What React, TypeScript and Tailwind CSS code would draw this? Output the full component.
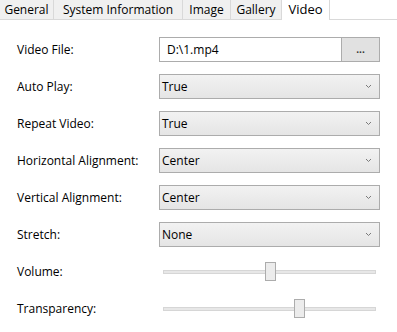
import React from "react";

const font = { fontFamily: '"Open Sans", "Noto Sans", sans-serif' };

const tabs = [
  { name: "General", w: "w-[54px]" },
  { name: "System Information", w: "w-[129px]" },
  { name: "Image", w: "w-[48px]" },
  { name: "Gallery", w: "w-[51px]" },
];

function Chevron() {
  return (
    <svg width="7" height="5" viewBox="0 0 7 5" className="shrink-0">
      <path d="M1 1 L3.5 3.5 L6 1" fill="none" stroke="#7a7a7a" strokeWidth="1" />
    </svg>
  );
}

function Select({ value }: { value: string }) {
  return (
    <div className="flex h-[25px] w-[221px] items-center justify-between border border-[#acacac] bg-gradient-to-b from-[#f2f2f2] to-[#e5e5e5] pl-[2px] pr-[7px] text-[12px] text-black">
      <span>{value}</span>
      <Chevron />
    </div>
  );
}

function Slider({ pos }: { pos: number }) {
  return (
    <div className="relative flex h-[25px] w-[221px] items-center px-[4px]">
      <div className="h-[4px] w-full border border-[#d6d6d6] bg-[#e7e7e7]" />
      <div
        className="absolute top-[3px] h-[19px] w-[11px] border border-[#acacac] bg-[#ececec]"
        style={{ left: pos }}
      />
    </div>
  );
}

function Row({ label, children }: { label: string; children: React.ReactNode }) {
  return (
    <div className="flex h-[37px] items-center">
      <div className="w-[142px] text-[12px] text-black">{label}</div>
      {children}
    </div>
  );
}

export default function App() {
  return (
    <div className="h-[332px] w-[397px] overflow-hidden bg-white" style={font}>
      {/* Tab strip */}
      <div className="flex h-[20px] items-end border-b border-[#d9d9d9]">
        {tabs.map((t) => (
          <div
            key={t.name}
            className={`${t.w} flex h-[20px] shrink-0 items-center justify-center border-r border-t border-[#d9d9d9] bg-[#f0f0f0] text-[12px] text-black`}
          >
            {t.name}
          </div>
        ))}
        <div className="relative -mb-px flex h-[21px] w-[48px] shrink-0 items-center justify-center border-r border-[#d9d9d9] bg-white text-[13px] text-black">
          Video
        </div>
      </div>

      {/* Form */}
      <div className="flex flex-col pl-[17px] pt-[11px]">
        <Row label="Video File:">
          <div className="flex h-[25px]">
            <div className="flex w-[183px] items-center border border-[#acacac] bg-white pl-[7px] text-[12px] text-black">
              D:\1.mp4
            </div>
            <div className="flex w-[38px] items-center justify-center border border-l-0 border-[#acacac] bg-[#e1e1e1] text-[10px] font-bold text-[#333]">
              ...
            </div>
          </div>
        </Row>
        <Row label="Auto Play:">
          <Select value="True" />
        </Row>
        <Row label="Repeat Video:">
          <Select value="True" />
        </Row>
        <Row label="Horizontal Alignment:">
          <Select value="Center" />
        </Row>
        <Row label="Vertical Alignment:">
          <Select value="Center" />
        </Row>
        <Row label="Stretch:">
          <Select value="None" />
        </Row>
        <Row label="Volume:">
          <Slider pos={106} />
        </Row>
        <Row label="Transparency:">
          <Slider pos={135} />
        </Row>
      </div>
    </div>
  );
}
